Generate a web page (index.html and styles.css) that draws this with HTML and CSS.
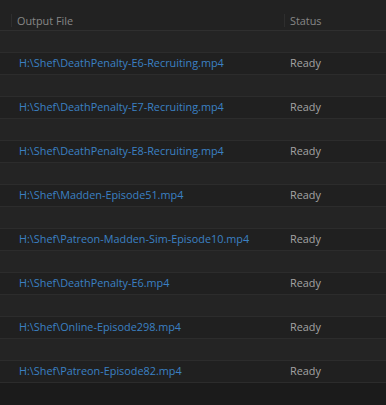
FILE: index.html
```html
<!DOCTYPE html>
<html lang="en">
<head>
    <meta charset="UTF-8">
    <title>Render Queue</title>
    <link rel="stylesheet" href="styles.css">
</head>
<body>
    <div class="queue">
        <div class="queue-header">
            <div class="col-file"><span class="sep"></span>Output File</div>
            <div class="col-status"><span class="sep"></span>Status</div>
        </div>

        <div class="row spacer"></div>
        <div class="row item">
            <div class="col-file path">H:\Shef\DeathPenalty-E6-Recruiting.mp4</div>
            <div class="col-status">Ready</div>
        </div>
        <div class="row spacer"></div>
        <div class="row item">
            <div class="col-file path">H:\Shef\DeathPenalty-E7-Recruiting.mp4</div>
            <div class="col-status">Ready</div>
        </div>
        <div class="row spacer"></div>
        <div class="row item">
            <div class="col-file path">H:\Shef\DeathPenalty-E8-Recruiting.mp4</div>
            <div class="col-status">Ready</div>
        </div>
        <div class="row spacer"></div>
        <div class="row item">
            <div class="col-file path">H:\Shef\Madden-Episode51.mp4</div>
            <div class="col-status">Ready</div>
        </div>
        <div class="row spacer"></div>
        <div class="row item">
            <div class="col-file path">H:\Shef\Patreon-Madden-Sim-Episode10.mp4</div>
            <div class="col-status">Ready</div>
        </div>
        <div class="row spacer"></div>
        <div class="row item">
            <div class="col-file path">H:\Shef\DeathPenalty-E6.mp4</div>
            <div class="col-status">Ready</div>
        </div>
        <div class="row spacer"></div>
        <div class="row item">
            <div class="col-file path">H:\Shef\Online-Episode298.mp4</div>
            <div class="col-status">Ready</div>
        </div>
        <div class="row spacer"></div>
        <div class="row item">
            <div class="col-file path">H:\Shef\Patreon-Episode82.mp4</div>
            <div class="col-status">Ready</div>
        </div>
    </div>
</body>
</html>
```

FILE: styles.css
```css
* {
    margin: 0;
    padding: 0;
    box-sizing: border-box;
}

html, body {
    height: 100%;
}

body {
    background: #1b1b1b;
    font-family: 'Open Sans', 'Noto Sans', sans-serif;
    font-size: 10.85px;
    color: #a3a3a3;
}

.queue-header {
    display: flex;
    height: 31px;
    padding-top: 13px;
    background: #222222;
    border-bottom: 1px solid #2f2f2f;
    color: #878787;
}

.queue-header > div {
    display: flex;
    align-items: center;
    height: 15px;
}

.sep {
    width: 1px;
    height: 13px;
    background: #2e2e2e;
    margin-right: 5px;
}

.queue-header .col-file {
    padding-left: 11px;
    width: 284px;
}

.row {
    display: flex;
    align-items: center;
    height: 22px;
    padding-bottom: 3px;
    border-bottom: 1px solid #2c2c2c;
}

.spacer {
    background: #242424;
}

.item {
    background: #202020;
}

.item .col-file {
    width: 290px;
    padding-left: 19px;
}

.path {
    color: #3b80c4;
}
```
